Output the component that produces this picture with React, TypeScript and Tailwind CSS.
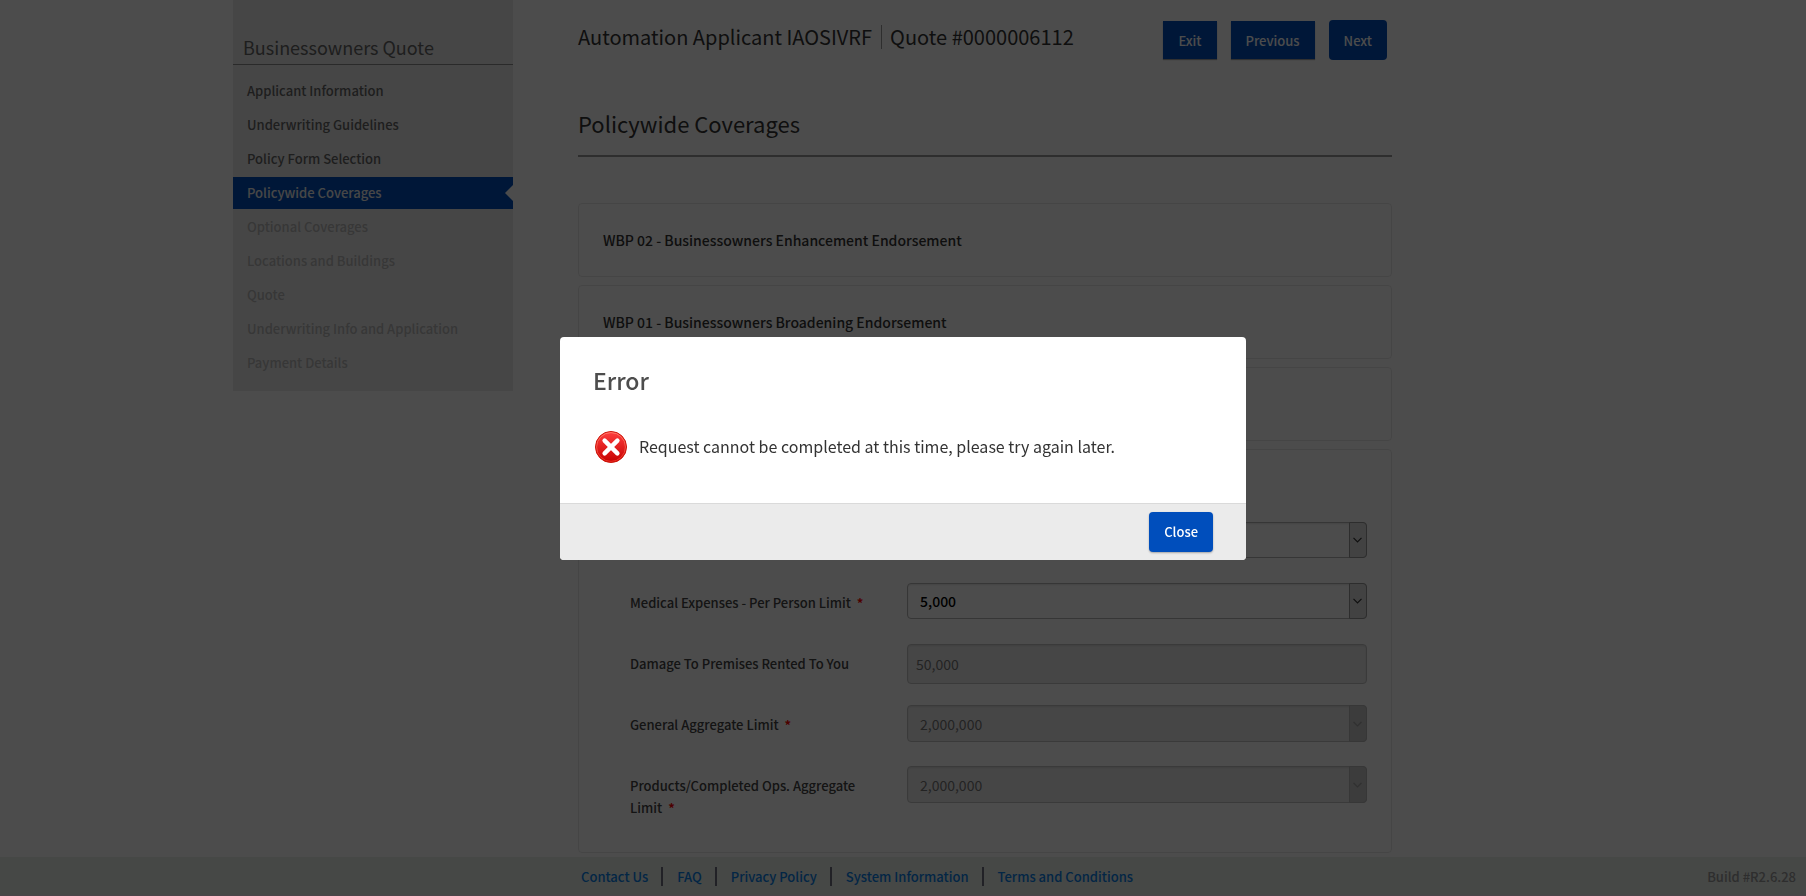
import React from "react";

type NavState = "done" | "active" | "disabled";

const NAV: { label: string; state: NavState }[] = [
  { label: "Applicant Information", state: "done" },
  { label: "Underwriting Guidelines", state: "done" },
  { label: "Policy Form Selection", state: "done" },
  { label: "Policywide Coverages", state: "active" },
  { label: "Optional Coverages", state: "disabled" },
  { label: "Locations and Buildings", state: "disabled" },
  { label: "Quote", state: "disabled" },
  { label: "Underwriting Info and Application", state: "disabled" },
  { label: "Payment Details", state: "disabled" },
];

const NAV_STYLES: Record<NavState, string> = {
  done: "text-[#666]",
  active: "bg-[#004ebc] text-[#eee]",
  disabled: "text-[#b8b8b8]",
};

const FOOTER_LINKS = [
  "Contact Us",
  "FAQ",
  "Privacy Policy",
  "System Information",
  "Terms and Conditions",
];

function Sidebar() {
  return (
    <aside className="w-[280px] shrink-0 self-start bg-[#ebebeb] pb-3">
      <h2 className="border-b border-[#8c8c8c] px-[10px] pt-[35px] pb-[5px] text-lg leading-6 text-[#666]">
        Businessowners Quote
      </h2>
      <nav className="mt-[10px] flex flex-col gap-[2px] text-[13px] leading-8 font-medium">
        {NAV.map((item) => (
          <a
            key={item.label}
            href="#"
            aria-current={item.state === "active" ? "page" : undefined}
            className={`relative block h-8 px-[14px] ${NAV_STYLES[item.state]}`}
          >
            {item.label}
            {item.state === "active" && (
              <svg className="absolute top-2 right-0 h-4 w-2" viewBox="0 0 8 16" aria-hidden="true">
                <path d="M8 0v16L0 8z" fill="#fff" />
              </svg>
            )}
          </a>
        ))}
      </nav>
    </aside>
  );
}

function Chevron() {
  return (
    <svg className="h-[6px] w-[9px]" viewBox="0 0 9 6" fill="none" stroke="currentColor" strokeWidth="1.2" aria-hidden="true">
      <path d="M.5.8l4 4 4-4" />
    </svg>
  );
}

function Required() {
  return <span className="ml-[6px] font-bold text-[#ff0000]">*</span>;
}

type FieldProps = {
  id: string;
  label: string;
  value: string;
  kind: "select" | "text";
  required?: boolean;
  disabled?: boolean;
};

function Field({ id, label, value, kind, required, disabled }: FieldProps) {
  return (
    <div className="flex min-h-10 items-start">
      <label htmlFor={id} className="w-[277px] shrink-0 pt-[9px] pr-8 text-[13px] leading-[22px] font-medium text-[#444]">
        {label}
        {required && <Required />}
      </label>
      {kind === "text" ? (
        <input
          id={id}
          defaultValue={value}
          disabled={disabled}
          className="h-10 min-w-0 flex-1 rounded border border-[#c4c4c4] bg-[#ebebeb] px-2 text-sm text-[#777] shadow-[inset_0_1px_2px_rgba(0,0,0,0.1)]"
        />
      ) : (
        <div className="relative min-w-0 flex-1">
          <select
            id={id}
            defaultValue={value}
            disabled={disabled}
            className={`block w-full appearance-none rounded border pl-3 text-sm opacity-100 shadow-[inset_0_1px_2px_rgba(0,0,0,0.1)] ${
              disabled
                ? "h-[37px] border-[#c4c4c4] bg-[#ebebeb] text-[#777]"
                : "h-9 border-[#b4b4b4] bg-white font-medium text-black"
            }`}
          >
            <option>{value}</option>
          </select>
          <span
            className={`pointer-events-none absolute inset-y-0 right-0 flex w-[18px] items-center justify-center rounded-r border pr-[2px] ${
              disabled ? "border-[#b8b8b8] bg-[#c8c8c8] text-[#a0a0a0]" : "border-[#969696] bg-[#dedede] text-[#333]"
            }`}
          >
            <Chevron />
          </span>
        </div>
      )}
    </div>
  );
}

function Card({ title }: { title: string }) {
  return (
    <section className="h-[74px] rounded-sm border border-[#e8e8e8] px-6">
      <h3 className="text-sm leading-[72px] font-medium text-[#333]">{title}</h3>
    </section>
  );
}

function HeaderButton({ label, primary }: { label: string; primary?: boolean }) {
  return (
    <button
      type="button"
      className={`bg-[#004ebc] px-[15px] pt-[2px] text-[13px] font-medium text-white ${
        primary ? "h-10 rounded-sm" : "h-[38px] shadow-[0_1px_1px_rgba(0,0,0,0.35)]"
      }`}
    >
      {label}
    </button>
  );
}

function ErrorIcon() {
  return (
    <svg className="h-8 w-8 shrink-0" viewBox="0 0 32 32" aria-hidden="true">
      <defs>
        <linearGradient id="err-fill" x1="0" y1="0" x2="0" y2="1">
          <stop offset="0" stopColor="#ff4040" />
          <stop offset="1" stopColor="#c60000" />
        </linearGradient>
        <linearGradient id="err-rim" x1="0" y1="0" x2="0" y2="1">
          <stop offset="0" stopColor="#ff7a6a" />
          <stop offset="1" stopColor="#e82a20" />
        </linearGradient>
      </defs>
      <circle cx="16" cy="16" r="15.5" fill="url(#err-fill)" stroke="#cc1408" strokeWidth="1" />
      <circle cx="16" cy="16" r="14.4" fill="none" stroke="url(#err-rim)" strokeWidth="1" />
      <path d="M9.6 9.6l12.8 12.8M22.4 9.6L9.6 22.4" stroke="#fff" strokeWidth="4.4" strokeLinecap="round" />
    </svg>
  );
}

function ErrorDialog() {
  return (
    <div className="fixed inset-0 z-20 flex items-center justify-center bg-black/70">
      <div
        role="alertdialog"
        aria-modal="true"
        aria-labelledby="err-title"
        aria-describedby="err-text"
        className="w-[686px] max-w-full overflow-hidden rounded-sm bg-white"
      >
        <div className="px-[33px] pt-[27px] pb-10">
          <h2 id="err-title" className="text-[23px] leading-8 font-medium text-[#4d4d4d]">
            Error
          </h2>
          <div className="mt-[35px] flex items-start gap-3 pl-[2px]">
            <ErrorIcon />
            <p id="err-text" className="text-base leading-[30px] text-[#333]">
              Request cannot be completed at this time, please try again later.
            </p>
          </div>
        </div>
        <div className="flex justify-end border-t border-[#dadada] bg-[#ebebeb] px-[33px] py-2">
          <button
            type="button"
            className="h-10 rounded-sm bg-[#004ebc] px-[15px] text-[13px] font-medium text-white shadow-[0_1px_2px_rgba(0,0,0,0.3)]"
          >
            Close
          </button>
        </div>
      </div>
    </div>
  );
}

export default function App() {
  return (
    <div className="min-h-screen bg-white font-['Noto_Sans_CJK_SC','Noto_Sans',sans-serif]">
      <div className="mx-auto flex max-w-[1340px] gap-[65px] pb-11">
        <Sidebar />
        <main className="max-w-[814px] min-w-0 flex-1">
          <header className="flex items-start justify-between pt-5 pr-[5px]">
            <h1 className="flex items-center text-xl leading-[34px] text-[#333]">
              Automation Applicant IAOSIVRF
              <span className="mr-2 ml-[9px] h-6 w-px bg-[#999]" />
              Quote #0000006112
            </h1>
            <div className="flex items-center gap-[14px]">
              <HeaderButton label="Exit" />
              <HeaderButton label="Previous" />
              <HeaderButton label="Next" primary />
            </div>
          </header>
          <h2 className="mt-[47px] border-b-2 border-[#999] pb-4 text-[22px] leading-8 text-[#333]">
            Policywide Coverages
          </h2>
          <div className="mt-[46px] flex flex-col gap-2">
            <Card title="WBP 02 - Businessowners Enhancement Endorsement" />
            <Card title="WBP 01 - Businessowners Broadening Endorsement" />
            <Card title="Business Liability" />
            <section className="rounded-sm border border-[#e8e8e8] pr-6 pb-[33px] pl-[51px]">
              <h3 className="text-sm leading-[72px] font-medium text-[#333]">Liability Limits</h3>
              <div className="flex flex-col gap-[21px]">
                <Field id="liability" label="Liability Limit" value="1,000,000" kind="select" required />
                <Field id="medical" label="Medical Expenses - Per Person Limit" value="5,000" kind="select" required />
                <Field id="damage" label="Damage To Premises Rented To You" value="50,000" kind="text" disabled />
                <Field id="general" label="General Aggregate Limit" value="2,000,000" kind="select" required disabled />
                <Field id="products" label="Products/Completed Ops. Aggregate Limit" value="2,000,000" kind="select" required disabled />
              </div>
            </section>
          </div>
        </main>
      </div>
      <footer className="fixed inset-x-0 bottom-0 z-10 flex h-[39px] justify-center border-b border-[#ffe4f4] bg-[#e9f0eb] text-[13px] font-medium">
        <div className="flex w-full max-w-[1340px] items-center pl-[348px]">
          {FOOTER_LINKS.map((label, i) => (
            <React.Fragment key={label}>
              {i > 0 && <span className="mr-[14px] ml-[13px] h-[19px] w-[2px] bg-[#707080]" />}
              <a href="#" className="pt-[2px] whitespace-nowrap text-[#0a7fe6]">
                {label}
              </a>
            </React.Fragment>
          ))}
        </div>
        <span className="absolute right-[10px] leading-10 text-[#999]">Build #R2.6.28</span>
      </footer>
      <ErrorDialog />
    </div>
  );
}
